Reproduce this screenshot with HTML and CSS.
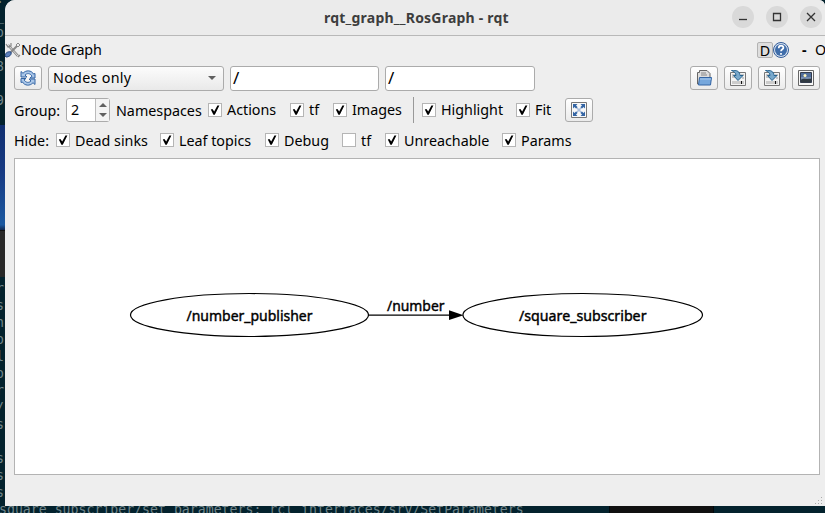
FILE: index.html
```html
<!DOCTYPE html>
<html lang="en">
<head>
<meta charset="utf-8">
<title>rqt_graph__RosGraph - rqt</title>
<link rel="stylesheet" href="styles.css">
</head>
<body>
<div class="desktop">
  <pre class="term-top">.
_
o

8

9</pre>
  <div class="wallpaper"></div>
  <div class="dark-panel"></div>
  <pre class="term-left">r
s
n
o
l
o
r
/
s

s
s
s</pre>
  <div class="term-bottom">square_subscriber/set_parameters: rcl_interfaces/srv/SetParameters</div>
  <div class="dock"></div>
</div>
<main class="window">
  <header class="titlebar">
    <span class="title">rqt_graph__RosGraph - rqt</span>
    <div class="controls">
      <span class="control"><svg width="22" height="22" viewBox="0 0 22 22"><path d="M7 13.500h8"/></svg></span>
      <span class="control"><svg width="22" height="22" viewBox="0 0 22 22"><path d="M7.500 7.500h7v7h-7z"/></svg></span>
      <span class="control"><svg width="22" height="22" viewBox="0 0 22 22"><path d="M7 7l8 8M15 7l-8 8"/></svg></span>
    </div>
  </header>
  <div class="dock-title">
    <svg class="tools" width="16" height="16" viewBox="0 0 16 16"><path d="M3 3l10 11" stroke="#888" stroke-width="2.600"/><path d="M3 3l10 11" stroke="#ddd" stroke-width="1"/><path d="M1 2l2 3 3-1V1M15 13l-2 2" fill="none" stroke="#888" stroke-width="1.200"/><path d="M14 2L6 10" stroke="#888" stroke-width="2"/><path d="M11 3l2-2 2 2-2 2z" fill="#eee" stroke="#888"/><path d="M0 14c0-3 3-5 6-4 1 3-2 5-5 5z" fill="#5c82bd" stroke="#27477d"/></svg>
    <span class="dock-name">Node Graph</span>
    <div class="dock-tools">
      <span class="d-button">D</span>
      <svg width="16" height="16" viewBox="0 0 16 16"><circle cx="8" cy="8" r="7.500" fill="#d7e1ef" stroke="#315b98"/><circle cx="8" cy="8" r="6" fill="#3f6daa"/><path d="M5.700 6.200c0-3.400 4.900-3.200 4.700-.3C10.300 7.300 8 7.300 8 9.300M8 11v1.700" fill="none" stroke="#fff" stroke-width="1.700"/></svg>
      <span class="dash">-</span><span class="close-o">O</span>
    </div>
  </div>
  <div class="row-main">
    <button class="tool"><svg width="16" height="16" viewBox="0 0 16 16"><path d="M1 1.500l2 1.800C6-.3 11.500.2 13.500 4l1.500-.5V8H10l2-1.800C10 3 7 3 5 5l2 2H1z" fill="#a9c6e8" stroke="#3465a4"/><path d="M15 14.500l-2-1.800C10 16.300 4.500 15.800 2.500 12L1 12.500V8.500h5L4 9.800c2 3.200 5 3.200 7 1.200L9 9h6z" fill="#a9c6e8" stroke="#3465a4"/></svg></button>
    <div class="select"><span>Nodes only</span><i class="caret"></i></div>
    <div class="input">/</div>
    <div class="input">/</div>
    <div class="tool-group">
      <button class="tool"><svg width="16" height="16" viewBox="0 0 16 16"><path d="M1.500 14V2.500h2V.5H11l3 3V14z" fill="#ddd" stroke="#666"/><path d="M5 3h5M5 5h6" stroke="#888"/><path d="M3.500 7.500h12l-1 7.500h-12z" fill="#76a7dc" stroke="#3465a4"/><path d="M4 9h11" stroke="#a7c9ed"/></svg></button>
      <button class="tool"><svg width="16" height="16" viewBox="0 0 16 16"><path d="M.5 2.500h15v13H.5z" fill="#f4f4f4" stroke="#777"/><path d="M2 11h12v3H2z" fill="#ccc"/><path d="M2 5h4M11 5h3M2 7h3M12 8h2" stroke="#999"/><path d="M11.500 11v3" stroke="#111"/><path d="M1.500.5C7-.5 10 2 10 5.500h3L8 10.500 3.500 5.500H6C6 3 4 1.500 1.500.5z" fill="#79a9cc" stroke="#28638e"/></svg></button>
      <button class="tool"><svg width="16" height="16" viewBox="0 0 16 16"><path d="M.5 2.500h15v13H.5z" fill="#f4f4f4" stroke="#777"/><path d="M2 11h12v3H2z" fill="#ccc"/><path d="M2 5h4M11 5h3M2 7h3M12 8h2" stroke="#999"/><path d="M11.500 11v3" stroke="#111"/><path d="M1.500.5C7-.5 10 2 10 5.500h3L8 10.500 3.500 5.500H6C6 3 4 1.500 1.500.5z" fill="#79a9cc" stroke="#28638e"/></svg></button>
      <button class="tool"><svg width="16" height="16" viewBox="0 0 16 16"><path d="M.5.5h15v15H.5z" fill="#f7f7f7" stroke="#666"/><path d="M2.500 2.500h11v10h-11z" fill="#526f9b" stroke="#333c4d"/><path d="M3 10l3-2 3 1 4-1v4H3z" fill="#303a42"/><path d="M3 8h10" stroke="#9eb1cc"/><circle cx="7" cy="5.500" r="1.500" fill="#fff6bb"/></svg></button>
    </div>
  </div>
  <div class="row-group">
    <span class="group-label">Group:</span>
    <div class="spin"><span>2</span><div class="steps"><i class="up"></i><i class="caret"></i></div></div>
    <span class="namespaces">Namespaces</span>
    <label class="check"><i class="box on"></i><span>Actions</span></label>
    <label class="check"><i class="box on"></i><span>tf</span></label>
    <label class="check"><i class="box on"></i><span>Images</span></label>
    <i class="separator"></i>
    <label class="check"><i class="box on"></i><span>Highlight</span></label>
    <label class="check"><i class="box on"></i><span>Fit</span></label>
    <button class="tool"><svg width="16" height="16" viewBox="0 0 16 16"><path d="M.5.5h15v15H.5z" fill="#f8f8f8" stroke="#777"/><path d="M5 5l6 6M11 5l-6 6" stroke="#a9bddb" stroke-width="1.500"/><path d="M2 2h4.500L5 3.500 6.500 5 5 6.500 3.500 5 2 6.500zM14 2H9.500L11 3.500 9.500 5 11 6.500 12.500 5 14 6.500zM2 14h4.500L5 12.500 6.500 11 5 9.500 3.500 11 2 9.500zM14 14H9.500l1.500-1.500L9.500 11 11 9.500l1.500 1.500L14 9.500z" fill="#3465a4"/></svg></button>
  </div>
  <div class="row-hide">
    <span>Hide:</span>
    <label class="check"><i class="box on"></i><span>Dead sinks</span></label>
    <label class="check"><i class="box on"></i><span>Leaf topics</span></label>
    <label class="check"><i class="box on"></i><span>Debug</span></label>
    <label class="check"><i class="box"></i><span>tf</span></label>
    <label class="check"><i class="box on"></i><span>Unreachable</span></label>
    <label class="check"><i class="box on"></i><span>Params</span></label>
  </div>
  <section class="canvas">
    <svg width="804" height="315" viewBox="15 159 804 315">
      <g fill="none" stroke="#000" stroke-width="1.200">
        <ellipse cx="249.500" cy="315" rx="119" ry="21.500"/>
        <ellipse cx="582.700" cy="315" rx="119.800" ry="21.500"/>
        <path d="M368.500 315.200H450"/>
      </g>
      <path d="M449 310.300l14.500 4.900-14.500 4.900z"/>
      <g class="node-text">
        <text x="186.500" y="320.500" textLength="126" lengthAdjust="spacingAndGlyphs">/number_publisher</text>
        <text x="519" y="320.500" textLength="127.500" lengthAdjust="spacingAndGlyphs">/square_subscriber</text>
        <text x="387" y="311.300" textLength="57.500" lengthAdjust="spacingAndGlyphs">/number</text>
      </g>
    </svg>
  </section>
  <svg class="grip" width="8" height="8" viewBox="0 0 8 8"><path d="M6 0h1v1H6zM3 3h1v1H3zM6 3h1v1H6zM0 6h1v1H0zM3 6h1v1H3zM6 6h1v1H6z" fill="#aaa"/></svg>
</main>
</body>
</html>
```
FILE: styles.css
```css
* { box-sizing: border-box; }
body {
  margin: 0;
  width: 825px;
  height: 513px;
  overflow: hidden;
  position: relative;
  font: 14.3px/20px "Noto Sans", sans-serif;
  color: #000;
}
svg { display: block; flex: none; }

.desktop {
  width: 825px;
  height: 513px;
  overflow: hidden;
  position: relative;
  background: #03222d;
  color: #71858a;
  font: 13.2px/17px "DejaVu Sans Mono", monospace;
}
.desktop pre { margin: 0; font: inherit; position: absolute; left: -4px; }
.term-top { top: -10px; }
.term-left { top: 280px; }
.wallpaper {
  position: absolute;
  top: 125px;
  width: 5px;
  height: 105px;
  background: linear-gradient(#102f70, #173a83 45%, #1b59a0 95%, #102850);
}
.dark-panel {
  position: absolute;
  top: 230px;
  width: 5px;
  height: 47px;
  background: #282828;
  border-top: 1px solid #101010;
}
.term-bottom { position: absolute; left: -1px; top: 501px; white-space: pre; letter-spacing: .01px; }
.dock {
  position: absolute;
  left: 609px;
  top: 506px;
  width: 105px;
  height: 7px;
  background: #101010;
  border: solid #00080b;
  border-width: 0 1px;
}

.window {
  position: absolute;
  left: 5px;
  top: 0;
  width: 820px;
  height: 506px;
  overflow: hidden;
  display: flex;
  flex-direction: column;
  background: #eee;
  border-radius: 10px 6px 0 0;
}
.titlebar {
  height: 36px;
  flex: none;
  display: grid;
  grid-template-columns: 1fr auto;
  align-items: center;
  border-bottom: 1px solid #b8b8b8;
  background: #ebebeb;
}
.title {
  padding-left: 319px;
  font-size: 14px;
  font-weight: 700;
  color: #3d3d3d;
  letter-spacing: .22px;
}
.controls { display: flex; gap: 12px; padding-right: 3px; padding-bottom: 1px; }
.control {
  width: 22px;
  height: 22px;
  border-radius: 50%;
  background: #d9d9d9;
}
.control path { fill: none; stroke: #333; stroke-width: 1.3; }

.dock-title { height: 28px; flex: none; display: flex; align-items: center; }
.dock-name { letter-spacing: -.1px; }
.dock-tools { margin-left: auto; width: 68px; height: 20px; display: flex; align-items: center; flex: none; }
.d-button {
  width: 16px;
  height: 16px;
  flex: none;
  line-height: 15px;
  text-align: center;
  border: 1px solid #b3b3b3;
  border-radius: 2px;
  background: #dedede;
}
.dash { margin-left: 13px; width: 13px; flex: none; font-weight: 700; }

.row-main {
  height: 28px;
  flex: none;
  margin: 0 5px 3px 9px;
  display: grid;
  grid-template-columns: 28px 176px 149px 150px 1fr;
  column-gap: 6px;
  align-items: center;
}
.tool {
  width: 28px;
  height: 24px;
  padding: 0;
  display: grid;
  place-items: center;
  border: 1px solid #ababab;
  border-radius: 3px;
  background: linear-gradient(#fff, #ebebeb);
}
.tool-group { display: flex; gap: 6px; justify-content: flex-end; }
.select, .input {
  height: 25px;
  display: flex;
  align-items: center;
  border: 1px solid #ababab;
  border-radius: 3px;
}
.select {
  justify-content: space-between;
  padding: 0 7px 0 4px;
  background: linear-gradient(#fcfcfc, #e9e9e9);
  letter-spacing: .3px;
}
.input { padding-left: 2px; background: #fff; font-size: 17px; }
.caret, .up { width: 0; height: 0; border: solid transparent; border-width: 0 4px; }
.caret { border-top: 4px solid #606060; }
.up { border-bottom: 4px solid #606060; }

.row-group {
  height: 30px;
  flex: none;
  margin-left: 9px;
  display: grid;
  grid-template-columns: 52px 50px 92px 82px 43px 80px 9px 94px 49px 28px;
  align-items: center;
  white-space: nowrap;
}
.group-label, .namespaces { padding-top: 2px; }
.spin {
  width: 44px;
  height: 24px;
  display: grid;
  grid-template-columns: 1fr 14px;
  align-items: center;
  padding-left: 4px;
  border: 1px solid #ababab;
  border-radius: 3px;
  background: #fff;
}
.steps {
  height: 22px;
  display: flex;
  flex-direction: column;
  gap: 6px;
  align-items: center;
  justify-content: center;
  border-left: 1px solid #bbb;
  background: #f3f3f3;
}
.separator { width: 1px; height: 26px; background: #999; }
.check { display: flex; align-items: center; gap: 5px; }
.box {
  width: 14px;
  height: 14px;
  flex: none;
  display: grid;
  place-items: center;
  border: 1px solid #b5b5b5;
  background: #fff;
}
.box.on::after {
  content: "";
  width: 10px;
  height: 10px;
  background: #000;
  clip-path: polygon(8% 45%, 24% 40%, 42% 65%, 74% 5%, 94% 5%, 48% 98%, 34% 98%);
}

.row-hide {
  height: 30px;
  flex: none;
  margin-left: 9px;
  display: grid;
  grid-template-columns: 42px 104px 105px 77px 43px 117px 80px;
  align-items: center;
  white-space: nowrap;
}
.row-hide > span, .row-hide .check > span { padding-top: 2px; }
.canvas {
  width: 806px;
  height: 317px;
  flex: none;
  margin: 3px 0 0 9px;
  border: 1px solid #b3b3b3;
  background: #fff;
}
.node-text {
  font: 15.2px "Noto Sans", sans-serif;
  stroke: #000;
  stroke-width: .45px;
}
.grip { position: absolute; right: 2px; bottom: 1px; }
```
